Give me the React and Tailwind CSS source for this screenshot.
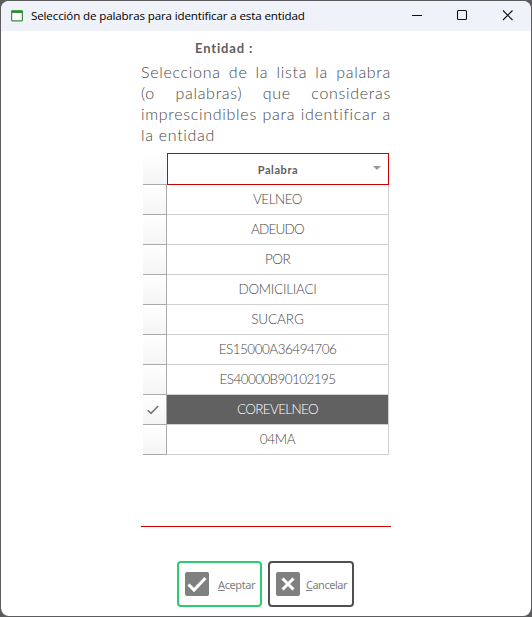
const ROWS = [
  { text: 'VELNEO', spacing: 'tracking-[-0.5px]' },
  { text: 'ADEUDO', spacing: 'tracking-[-0.8px]' },
  { text: 'POR', spacing: 'tracking-[-0.5px]' },
  { text: 'DOMICILIACI', spacing: 'tracking-[-0.25px]' },
  { text: 'SUCARG', spacing: 'tracking-[-0.1px]' },
  { text: 'ES15000A36494706', spacing: 'tracking-[-0.5px]' },
  { text: 'ES40000B90102195', spacing: 'tracking-[-0.6px]' },
  { text: 'COREVELNEO', spacing: 'tracking-[-0.65px]', selected: true },
  { text: '04MA', spacing: 'tracking-[-0.3px]' },
];

const LINES = [
  ['Selecciona', 'de', 'la', 'lista', 'la', 'palabra'],
  ['(o', 'palabras)', 'que', 'consideras'],
  ['imprescindibles', 'para', 'identificar', 'a'],
];

function TitleBar() {
  return (
    <header className="flex h-[30px] shrink-0 items-center bg-[#eff2f8] pl-[10px] font-['Open_Sans','Noto_Sans',sans-serif] text-[11.6px] text-black">
      <svg width="12" height="12" viewBox="0 0 12 12" className="-mt-px mr-[8px] shrink-0">
        <rect x="0.6" y="0.8" width="10.8" height="10" rx="0.8" fill="#fff" stroke="#388e3c" strokeWidth="1.2" />
        <path d="M0.5 0.5h11v2.5h-11z" fill="#388e3c" />
      </svg>
      <span className="whitespace-nowrap tracking-[-0.14px]">Selección de palabras para identificar a esta entidad</span>
      <svg width="104" height="12" viewBox="0 0 104 12" className="-mt-[2px] mr-[16px] ml-auto shrink-0" fill="none" stroke="#111" strokeWidth="1.1">
        <path d="M1 6.5h10" />
        <rect x="46.5" y="1.5" width="9" height="9" rx="1" />
        <path d="M92 1.5l9.5 9.5M101.500 1.500l-9.500 9.500" />
      </svg>
    </header>
  );
}

function Row({ text, spacing, selected }) {
  return (
    <div className="flex h-[30px]">
      <div className="flex w-[24px] items-center justify-center border-r border-b border-[#aaa] bg-linear-to-b from-white to-[#f5f5f5]">
        {selected && (
          <svg width="12" height="10" viewBox="0 0 12 10" className="-ml-[3px]" fill="none" stroke="#777" strokeWidth="1.6">
            <path d="M0.700 5.200L4 8.400L11.300 1" />
          </svg>
        )}
      </div>
      <div className={`flex w-[222px] items-center justify-center border-r border-b border-[#d0d0d0] ${selected ? 'bg-[#616161] text-white' : ''}`}>
        <span className={spacing}>{text}</span>
      </div>
    </div>
  );
}

function Button({ children, color, icon, gap }) {
  return (
    <button className={`flex h-[46px] items-center rounded-[4px] border-2 bg-white pl-[6px] font-['Noto_Sans',sans-serif] text-[11px] text-[#808080] ${color}`}>
      <svg width="24" height="24" viewBox="0 0 24 24" className={`shrink-0 ${gap}`} fill="none" stroke="#fff" strokeWidth="3">
        <rect width="24" height="24" rx="2" fill="#808080" stroke="none" />
        <path d={icon} />
      </svg>
      {children}
    </button>
  );
}

export default function App() {
  return (
    <div className="h-[617px] w-[532px] overflow-hidden bg-[#5c5c5e] p-px">
      <div className="flex h-[615px] w-[530px] flex-col overflow-hidden rounded-[8px] bg-white font-['Lato',sans-serif] text-[#484848]">
        <TitleBar />
        <main className="flex flex-col">
          <h1 className="mt-[7px] ml-[194px] h-[20px] text-[13px] leading-[20px] font-bold tracking-[0.85px] text-[#606060]">Entidad :</h1>
          <div className="mt-[3px] ml-[140px] w-[250px] text-[16px] leading-[21px] font-light tracking-[0.7px]">
            {LINES.map((words) => (
              <p key={words[0]} className="flex justify-between">
                {words.map((word, i) => <span key={i}>{word}</span>)}
              </p>
            ))}
            <p>la entidad</p>
          </div>
          <section className="mt-[8px] ml-[142px] w-[246px] text-[13.5px] font-light">
            <div className="flex h-[32px]">
              <div className="mt-px h-[31px] w-[24px] border-b border-[#aaa] bg-linear-to-b from-white to-[#f5f5f5]" />
              <div className="relative flex w-[222px] items-center justify-center border border-[#cc0000] pt-[2px] text-[11px] font-bold tracking-[0.6px] text-[#606060]">
                Palabra
                <svg width="8" height="4" viewBox="0 0 8 4" className="absolute top-[12px] right-[7px]">
                  <path d="M0 0h8L4 4z" fill="#999" />
                </svg>
              </div>
            </div>
            {ROWS.map((row) => <Row key={row.text} {...row} />)}
          </section>
          <div className="mt-[71px] ml-[140px] h-px w-[250px] bg-[#cc0000]" />
          <footer className="mt-[34px] ml-[176px] flex gap-[6px]">
            <Button color="w-[85px] border-[#2ecc71]" gap="mr-[9px]" icon="M3.500 12.500L9 18L20.500 6">
              <span className="pt-[2px] tracking-[-0.4px]"><u>A</u>ceptar</span>
            </Button>
            <Button color="w-[86px] border-[#505050]" gap="mr-[6px]" icon="M6.500 6.500l11 11M17.500 6.500l-11 11">
              <span className="pt-[2px] tracking-[-0.5px]"><u>C</u>ancelar</span>
            </Button>
          </footer>
        </main>
      </div>
    </div>
  );
}
